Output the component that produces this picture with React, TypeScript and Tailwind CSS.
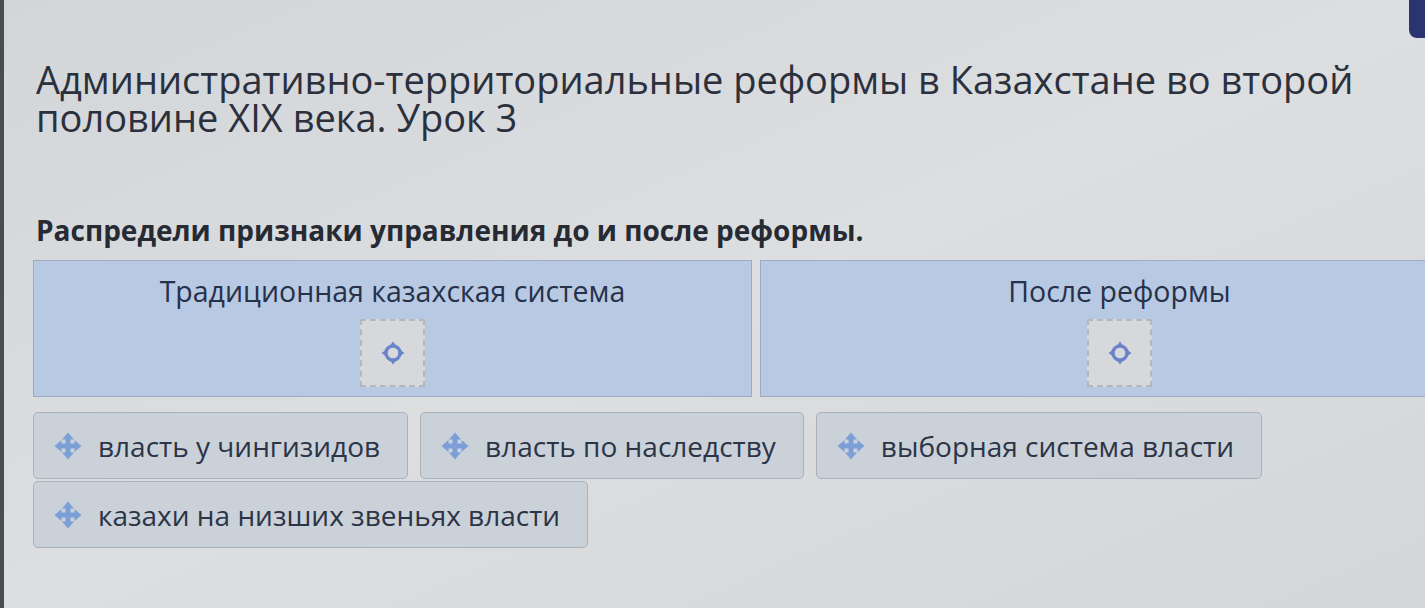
import React from "react";

const font = { fontFamily: '"Open Sans", "Noto Sans", sans-serif' };

function MoveIcon() {
    return (
        <svg width="28" height="28" viewBox="0 0 28 28" className="shrink-0">
            <g stroke="#7b9fd6" strokeWidth="5" strokeLinecap="butt">
                <line x1="14" y1="6" x2="14" y2="22" />
                <line x1="6" y1="14" x2="22" y2="14" />
            </g>
            <g fill="#7b9fd6">
                <polygon points="14,0.5 20,7.5 8,7.5" />
                <polygon points="14,27.5 20,20.5 8,20.5" />
                <polygon points="0.5,14 7.5,8 7.5,20" />
                <polygon points="27.5,14 20.5,8 20.5,20" />
            </g>
        </svg>
    );
}

function TargetIcon() {
    return (
        <svg width="24" height="24" viewBox="0 0 22 22">
            <circle cx="11" cy="11" r="6.5" fill="none" stroke="#6a84c9" strokeWidth="3" />
            <g fill="#6a84c9">
                <polygon points="11,0.5 15,6 7,6" />
                <polygon points="11,21.5 15,16 7,16" />
                <polygon points="0.5,11 6,7 6,15" />
                <polygon points="21.5,11 16,7 16,15" />
            </g>
        </svg>
    );
}

function DropZone({ title }: { title: string }) {
    return (
        <div className="flex flex-col items-center bg-[#b8c9e3] border border-[#9eabc0] pt-[12px] pb-[9px]">
            <div className="text-[28.5px] leading-[36px] text-[#27314a]">{title}</div>
            <div className="mt-[10px] w-[65px] h-[68px] bg-[#d6d8dc] border-2 border-dashed border-[#b3b7be] flex items-center justify-center">
                <TargetIcon />
            </div>
        </div>
    );
}

function Chip({ label }: { label: string }) {
    return (
        <div className="flex items-center gap-[16px] h-[67px] pl-[20px] pr-[27px] bg-[#cbd1d8] border border-[#a9b1bb] rounded-[5px]">
            <MoveIcon />
            <span className="text-[28px] text-[#2c3447]">{label}</span>
        </div>
    );
}

export default function App() {
    const items = [
        "власть у чингизидов",
        "власть по наследству",
        "выборная система власти",
        "казахи на низших звеньях власти",
    ];

    return (
        <div
            className="w-[1425px] h-[608px] overflow-hidden bg-gradient-to-br from-[#d3d6d9] via-[#dcdee0] to-[#d4d6d8] border-l-[4px] border-[#4a4c50] flex flex-col"
            style={font}
        >
            <div className="flex justify-end h-[38px]">
                <div className="w-[16px] h-[38px] bg-[#2a3470] rounded-bl-[8px]" />
            </div>
            <h1 className="mt-[22px] pl-[32px] pr-[40px] text-[38px] leading-[38px] text-[#2b303d]">
                Административно-территориальные реформы в Казахстане во второй
                половине XIX века. Урок 3
            </h1>
            <div className="mt-[76px] pl-[32px] text-[28px] leading-[36px] font-bold text-[#262a33]">
                Распредели признаки управления до и после реформы.
            </div>
            <div className="mt-[12px] ml-[29px] grid grid-cols-[719px_719px] gap-[8px]">
                <DropZone title="Традиционная казахская система" />
                <DropZone title="После реформы" />
            </div>
            <div className="mt-[15px] ml-[29px] flex flex-wrap gap-x-[12px] gap-y-[2px]">
                {items.map((t) => (
                    <Chip key={t} label={t} />
                ))}
            </div>
        </div>
    );
}
